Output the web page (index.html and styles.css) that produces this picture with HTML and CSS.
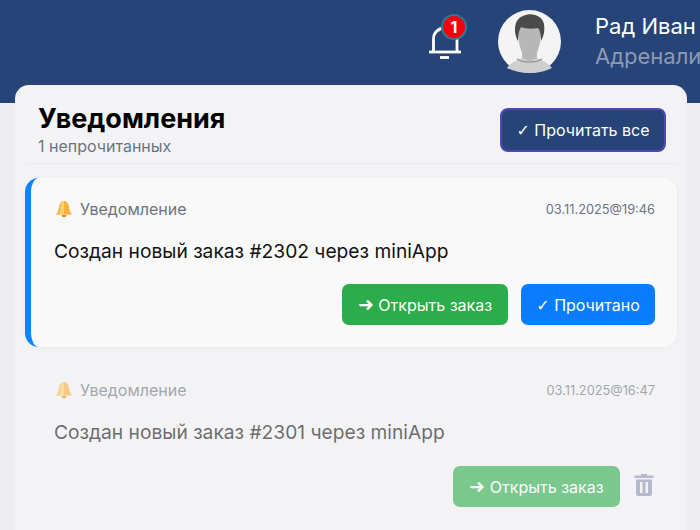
FILE: index.html
```html
<!DOCTYPE html>
<html lang="ru">
<head>
    <meta charset="UTF-8">
    <meta name="viewport" content="width=device-width, initial-scale=1.0">
    <title>Уведомления</title>
    <link rel="stylesheet" href="styles.css">
</head>
<body>

    <header class="topbar">
        <div class="bell">
            <svg width="34" height="38" viewBox="0 0 34 38" fill="none" stroke="#fff" stroke-width="2.800">
                <path d="M5.500 30V17C5.500 10 11 6 17 6S29 10 29 17V30"/>
                <path d="M1 30H33"/>
                <path d="M12 35.500H21"/>
            </svg>
            <span class="bell-badge">1</span>
        </div>
        <div class="avatar">
            <svg width="63" height="63" viewBox="0 0 63 63">
                <circle cx="31.500" cy="31.500" r="31.500" fill="#f4f4f4"/>
                <path d="M9 58C13 52 20 50 24 48H39C43 50 50 52 54 58C48 61 40 63 31.500 63S15 61 9 58Z" fill="#cfcfcf"/>
                <path d="M24 38H39V48C35 51 28 51 24 48Z" fill="#bcbcbc"/>
                <path d="M19 49C25 53 38 53 44 49" fill="none" stroke="#8f8f8f" stroke-width="1.200"/>
                <path d="M20 22C20 15 25 11 31.500 11S43 15 43 22C43 36 37 51 31.500 51S20 36 20 22Z" fill="#b7b7b7"/>
                <path d="M20 31C15 22 16 9 25 6C33 2 44 5 46 14C47 20 46 26 43 31C43 25 42 20 40 18C35 19 27 19 23 17C21 20 20 26 20 31Z" fill="#4a4a4a"/>
            </svg>
        </div>
        <div class="user">
            <div class="user-name">Рад Иван</div>
            <div class="user-org">Адреналин</div>
        </div>
    </header>

    <main class="panel">
        <div class="panel-head">
            <div>
                <h1>Уведомления</h1>
                <div class="unread">1 непрочитанных</div>
            </div>
            <button class="btn btn-all"><span class="mark">✓</span> Прочитать все</button>
        </div>

        <!-- Непрочитанное -->
        <div class="note note-new">
            <div class="note-top">
                <span class="note-type">
                    <svg class="emoji" width="18" height="18" viewBox="0 0 18 18">
                        <path d="M9 1C6 1 4.500 3.500 4 7C3.600 10 3 12 1 14.500H17C15 12 14.400 10 14 7C13.500 3.500 12 1 9 1Z" fill="#fbb03b"/>
                        <path d="M9 1C7 1 5.500 3.500 5.500 7C5.300 10 5 12 4 14.500H9Z" fill="#fdd06f"/>
                        <path d="M6.500 15H11.500C11.300 16.500 10.300 17.300 9 17.300S6.700 16.500 6.500 15Z" fill="#ee8a1d"/>
                    </svg>
                    Уведомление
                </span>
                <span class="note-date">03.11.2025@19:46</span>
            </div>
            <div class="note-text">Создан новый заказ #2302 через miniApp</div>
            <div class="note-actions">
                <button class="btn btn-open"><span class="arrow">➜</span> Открыть заказ</button>
                <button class="btn btn-read"><span class="mark">✓</span> Прочитано</button>
            </div>
        </div>

        <!-- Прочитанное -->
        <div class="note note-old">
            <div class="note-top">
                <span class="note-type">
                    <svg class="emoji" width="18" height="18" viewBox="0 0 18 18">
                        <path d="M9 1C6 1 4.500 3.500 4 7C3.600 10 3 12 1 14.500H17C15 12 14.400 10 14 7C13.500 3.500 12 1 9 1Z" fill="#fbb03b"/>
                        <path d="M9 1C7 1 5.500 3.500 5.500 7C5.300 10 5 12 4 14.500H9Z" fill="#fdd06f"/>
                        <path d="M6.500 15H11.500C11.300 16.500 10.300 17.300 9 17.300S6.700 16.500 6.500 15Z" fill="#ee8a1d"/>
                    </svg>
                    Уведомление
                </span>
                <span class="note-date">03.11.2025@16:47</span>
            </div>
            <div class="note-text">Создан новый заказ #2301 через miniApp</div>
            <div class="note-actions">
                <button class="btn btn-open"><span class="arrow">➜</span> Открыть заказ</button>
                <svg class="trash" width="21" height="23" viewBox="0 0 21 23">
                    <path d="M7 2.500V1H13V2.500H19.500V5H.5V2.500Z" fill="#8f93ad"/>
                    <path fill-rule="evenodd" d="M2 6.500H18V21C18 22 17 23 16 23H4C3 23 2 22 2 21ZM6 9V20H8.500V9ZM11.500 9V20H14V9Z" fill="#8f93ad"/>
                </svg>
            </div>
        </div>
    </main>

</body>
</html>
```

FILE: styles.css
```css
body, html {
    margin: 0;
    padding: 0;
    height: 100%;
    overflow: hidden;
    background: #eeeef0;
    font-family: Inter, "Liberation Sans", sans-serif;
}

/* Верхняя панель */
.topbar {
    display: flex;
    height: 103px;
    padding: 10px 0 0 428px;
    box-sizing: border-box;
    background: #264478;
    color: #fff;
    white-space: nowrap;
    overflow: hidden;
}

.bell {
    position: relative;
    width: 34px;
    height: 38px;
    margin-top: 12px;
    margin-right: 36px;
}

.bell svg {
    display: block;
}

.bell-badge {
    position: absolute;
    top: -8px;
    left: 13px;
    width: 22px;
    height: 22px;
    border: 2px solid #2a7a94;
    border-radius: 50%;
    background: #f5000f;
    font-size: 16px;
    font-weight: 700;
    line-height: 22px;
    text-align: center;
}

.avatar {
    width: 63px;
    height: 63px;
    margin-right: 34px;
}

.avatar svg {
    display: block;
}

.user-name {
    margin-top: 3px;
    font-size: 22px;
    line-height: 26px;
}

.user-org {
    margin-top: 4px;
    font-size: 22px;
    line-height: 26px;
    color: #8c9ab5;
}

/* Основной блок */
.panel {
    margin: -18px 13px 0 15px;
    height: 445px;
    padding: 0 10px;
    background: #f3f3f5;
    border-radius: 14px 14px 0 0;
}

.panel-head {
    display: flex;
    justify-content: space-between;
    align-items: flex-start;
    height: 79px;
    margin-bottom: 14px;
    padding: 18px 11px 0 13px;
    box-sizing: border-box;
    border-bottom: 1px solid #ebebef;
}

h1 {
    margin: 0;
    font-size: 27px;
    font-weight: 700;
    line-height: 32px;
    color: #000;
}

.unread {
    margin-top: 1px;
    font-size: 16px;
    line-height: 20px;
    color: #6c757d;
}

.btn {
    height: 41px;
    padding: 0;
    border: none;
    border-radius: 7px;
    color: #fff;
    font-family: inherit;
    font-size: 16px;
}

.mark {
    font-family: "DejaVu Sans", sans-serif;
}

.arrow {
    font-size: 19px;
    line-height: 1;
}

.btn-all {
    width: 166px;
    height: 44px;
    margin-top: 5px;
    border: 2px solid #5148b8;
    border-radius: 8px;
    background: #264478;
}

.btn-open {
    width: 166px;
    background: #2aad4a;
}

.btn-read {
    width: 134px;
    background: #0a7cff;
}

/* Карточки */
.note {
    padding: 22px 22px 10px 29px;
    border-radius: 14px;
}

.note-new {
    height: 169px;
    box-sizing: border-box;
    border-left: 6px solid #0a84ff;
    padding-left: 23px;
    background: #f9f9fa;
    box-shadow: 0 1px 6px rgba(0, 0, 0, 0.04);
}

.note-old {
    opacity: 0.6;
    padding-top: 34px;
}

.note-old .btn-open {
    width: 167px;
}

.note-top {
    display: flex;
    justify-content: space-between;
    align-items: center;
    height: 18px;
}

.note-type {
    display: flex;
    align-items: center;
    gap: 7px;
    font-size: 16px;
    color: #6c757d;
}

.emoji {
    margin-left: 1px;
}

.note-date {
    font-size: 12.800px;
    color: #6c757d;
}

.note-text {
    margin-top: 21px;
    font-size: 19.200px;
    line-height: 24px;
    color: #111;
}

.note-actions {
    display: flex;
    justify-content: flex-end;
    align-items: center;
    gap: 13px;
    margin-top: 21px;
}

.note-old .note-actions {
    gap: 14px;
    margin-top: 22px;
}

.trash {
    margin-top: -5px;
}
```
